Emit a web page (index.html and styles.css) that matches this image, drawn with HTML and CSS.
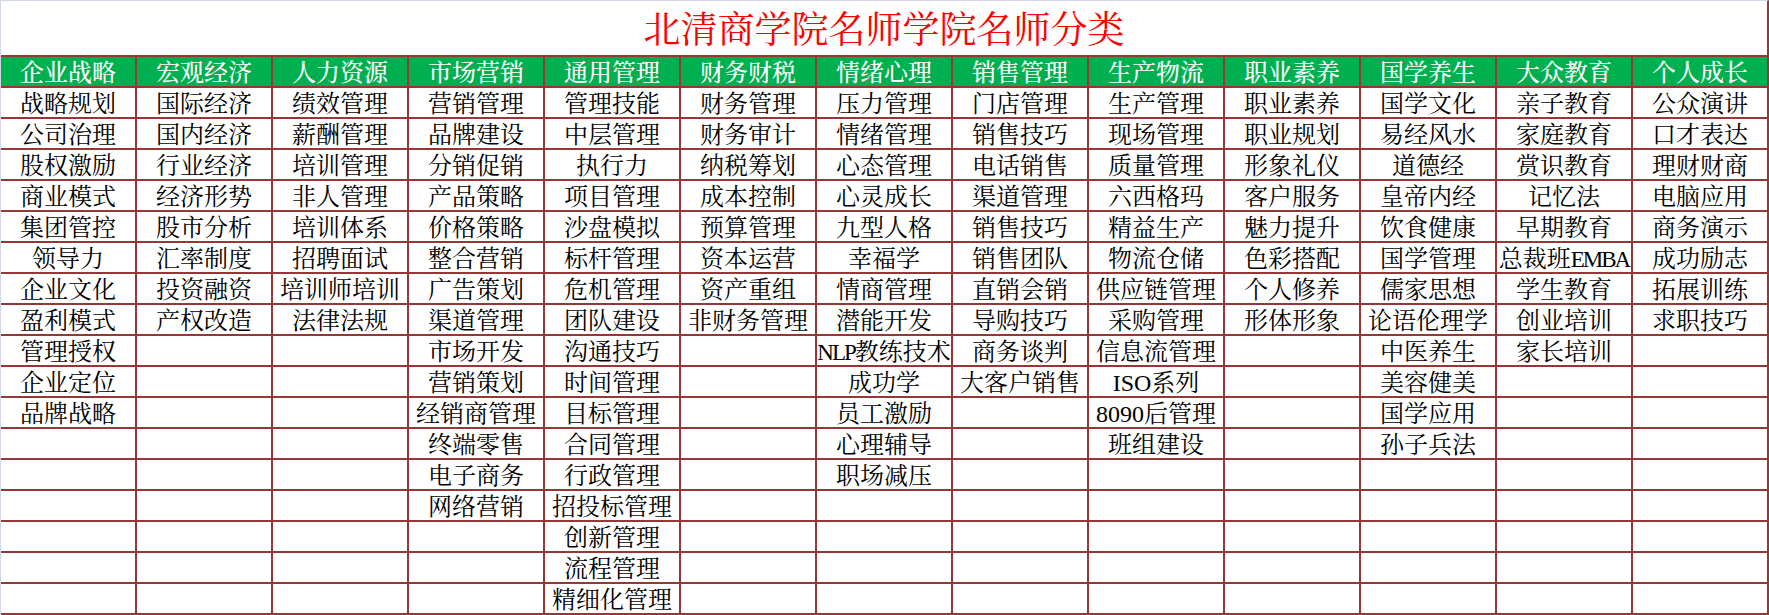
FILE: index.html
```html
<!DOCTYPE html>
<html lang="zh-CN">
<head>
<meta charset="utf-8">
<title>北清商学院名师学院名师分类</title>
<link rel="stylesheet" href="styles.css">
</head>
<body>
<div class="sheet">
  <div class="title">北清商学院名师学院名师分类</div>
  <div class="table">
    <div class="col">
      <div class="cell head">企业战略</div>
      <div class="cell">战略规划</div><div class="cell">公司治理</div><div class="cell">股权激励</div><div class="cell">商业模式</div><div class="cell">集团管控</div><div class="cell">领导力</div><div class="cell">企业文化</div><div class="cell">盈利模式</div><div class="cell">管理授权</div><div class="cell">企业定位</div><div class="cell">品牌战略</div><div class="cell"></div><div class="cell"></div><div class="cell"></div><div class="cell"></div><div class="cell"></div><div class="cell"></div>
    </div>
    <div class="col">
      <div class="cell head">宏观经济</div>
      <div class="cell">国际经济</div><div class="cell">国内经济</div><div class="cell">行业经济</div><div class="cell">经济形势</div><div class="cell">股市分析</div><div class="cell">汇率制度</div><div class="cell">投资融资</div><div class="cell">产权改造</div><div class="cell"></div><div class="cell"></div><div class="cell"></div><div class="cell"></div><div class="cell"></div><div class="cell"></div><div class="cell"></div><div class="cell"></div><div class="cell"></div>
    </div>
    <div class="col">
      <div class="cell head">人力资源</div>
      <div class="cell">绩效管理</div><div class="cell">薪酬管理</div><div class="cell">培训管理</div><div class="cell">非人管理</div><div class="cell">培训体系</div><div class="cell">招聘面试</div><div class="cell">培训师培训</div><div class="cell">法律法规</div><div class="cell"></div><div class="cell"></div><div class="cell"></div><div class="cell"></div><div class="cell"></div><div class="cell"></div><div class="cell"></div><div class="cell"></div><div class="cell"></div>
    </div>
    <div class="col">
      <div class="cell head">市场营销</div>
      <div class="cell">营销管理</div><div class="cell">品牌建设</div><div class="cell">分销促销</div><div class="cell">产品策略</div><div class="cell">价格策略</div><div class="cell">整合营销</div><div class="cell">广告策划</div><div class="cell">渠道管理</div><div class="cell">市场开发</div><div class="cell">营销策划</div><div class="cell">经销商管理</div><div class="cell">终端零售</div><div class="cell">电子商务</div><div class="cell">网络营销</div><div class="cell"></div><div class="cell"></div><div class="cell"></div>
    </div>
    <div class="col">
      <div class="cell head">通用管理</div>
      <div class="cell">管理技能</div><div class="cell">中层管理</div><div class="cell">执行力</div><div class="cell">项目管理</div><div class="cell">沙盘模拟</div><div class="cell">标杆管理</div><div class="cell">危机管理</div><div class="cell">团队建设</div><div class="cell">沟通技巧</div><div class="cell">时间管理</div><div class="cell">目标管理</div><div class="cell">合同管理</div><div class="cell">行政管理</div><div class="cell">招投标管理</div><div class="cell">创新管理</div><div class="cell">流程管理</div><div class="cell">精细化管理</div>
    </div>
    <div class="col">
      <div class="cell head">财务财税</div>
      <div class="cell">财务管理</div><div class="cell">财务审计</div><div class="cell">纳税筹划</div><div class="cell">成本控制</div><div class="cell">预算管理</div><div class="cell">资本运营</div><div class="cell">资产重组</div><div class="cell">非财务管理</div><div class="cell"></div><div class="cell"></div><div class="cell"></div><div class="cell"></div><div class="cell"></div><div class="cell"></div><div class="cell"></div><div class="cell"></div><div class="cell"></div>
    </div>
    <div class="col">
      <div class="cell head">情绪心理</div>
      <div class="cell">压力管理</div><div class="cell">情绪管理</div><div class="cell">心态管理</div><div class="cell">心灵成长</div><div class="cell">九型人格</div><div class="cell">幸福学</div><div class="cell">情商管理</div><div class="cell">潜能开发</div><div class="cell"><span class="lat">NLP</span>教练技术</div><div class="cell">成功学</div><div class="cell">员工激励</div><div class="cell">心理辅导</div><div class="cell">职场减压</div><div class="cell"></div><div class="cell"></div><div class="cell"></div><div class="cell"></div>
    </div>
    <div class="col">
      <div class="cell head">销售管理</div>
      <div class="cell">门店管理</div><div class="cell">销售技巧</div><div class="cell">电话销售</div><div class="cell">渠道管理</div><div class="cell">销售技巧</div><div class="cell">销售团队</div><div class="cell">直销会销</div><div class="cell">导购技巧</div><div class="cell">商务谈判</div><div class="cell">大客户销售</div><div class="cell"></div><div class="cell"></div><div class="cell"></div><div class="cell"></div><div class="cell"></div><div class="cell"></div><div class="cell"></div>
    </div>
    <div class="col">
      <div class="cell head">生产物流</div>
      <div class="cell">生产管理</div><div class="cell">现场管理</div><div class="cell">质量管理</div><div class="cell">六西格玛</div><div class="cell">精益生产</div><div class="cell">物流仓储</div><div class="cell">供应链管理</div><div class="cell">采购管理</div><div class="cell">信息流管理</div><div class="cell">ISO系列</div><div class="cell">8090后管理</div><div class="cell">班组建设</div><div class="cell"></div><div class="cell"></div><div class="cell"></div><div class="cell"></div><div class="cell"></div>
    </div>
    <div class="col">
      <div class="cell head">职业素养</div>
      <div class="cell">职业素养</div><div class="cell">职业规划</div><div class="cell">形象礼仪</div><div class="cell">客户服务</div><div class="cell">魅力提升</div><div class="cell">色彩搭配</div><div class="cell">个人修养</div><div class="cell">形体形象</div><div class="cell"></div><div class="cell"></div><div class="cell"></div><div class="cell"></div><div class="cell"></div><div class="cell"></div><div class="cell"></div><div class="cell"></div><div class="cell"></div>
    </div>
    <div class="col">
      <div class="cell head">国学养生</div>
      <div class="cell">国学文化</div><div class="cell">易经风水</div><div class="cell">道德经</div><div class="cell">皇帝内经</div><div class="cell">饮食健康</div><div class="cell">国学管理</div><div class="cell">儒家思想</div><div class="cell">论语伦理学</div><div class="cell">中医养生</div><div class="cell">美容健美</div><div class="cell">国学应用</div><div class="cell">孙子兵法</div><div class="cell"></div><div class="cell"></div><div class="cell"></div><div class="cell"></div><div class="cell"></div>
    </div>
    <div class="col">
      <div class="cell head">大众教育</div>
      <div class="cell">亲子教育</div><div class="cell">家庭教育</div><div class="cell">赏识教育</div><div class="cell">记忆法</div><div class="cell">早期教育</div><div class="cell">总裁班<span class="lat">EMBA</span></div><div class="cell">学生教育</div><div class="cell">创业培训</div><div class="cell">家长培训</div><div class="cell"></div><div class="cell"></div><div class="cell"></div><div class="cell"></div><div class="cell"></div><div class="cell"></div><div class="cell"></div><div class="cell"></div>
    </div>
    <div class="col">
      <div class="cell head">个人成长</div>
      <div class="cell">公众演讲</div><div class="cell">口才表达</div><div class="cell">理财财商</div><div class="cell">电脑应用</div><div class="cell">商务演示</div><div class="cell">成功励志</div><div class="cell">拓展训练</div><div class="cell">求职技巧</div><div class="cell"></div><div class="cell"></div><div class="cell"></div><div class="cell"></div><div class="cell"></div><div class="cell"></div><div class="cell"></div><div class="cell"></div><div class="cell"></div>
    </div>
  </div>
</div>
</body>
</html>
```

FILE: styles.css
```css
html, body {
  margin: 0;
  padding: 0;
  background: #ffffff;
}

.sheet {
  width: 1769px;
  box-sizing: border-box;
  border-top: 1px solid #d0d7e5;
  border-left: 1px solid #d0d7e5;
  border-right: 2px solid #953735;
  font-family: "Liberation Serif", "Noto Serif CJK SC", "Noto Sans CJK SC", serif;
  color: #000000;
}

.title {
  height: 54px;
  box-sizing: border-box;
  padding-top: 5px;
  display: flex;
  align-items: center;
  justify-content: center;
  color: #ff0000;
  font-size: 37px;
  line-height: 49px;
  white-space: nowrap;
}

.table {
  display: grid;
  grid-template-columns: repeat(12, 136px) 134px;
  border-top: 2px solid #953735;
}

.col {
  display: flex;
  flex-direction: column;
}

.cell {
  height: 31px;
  box-sizing: border-box;
  padding-top: 4px;
  border-right: 2px solid #953735;
  border-bottom: 2px solid #953735;
  display: flex;
  align-items: center;
  justify-content: center;
  font-size: 24px;
  line-height: 25px;
  white-space: nowrap;
}

.col:last-child .cell {
  border-right: 0;
}

.head {
  background: #00b050;
  color: #ffffff;
  font-weight: 500;
}

.lat {
  font-size: 23px;
  letter-spacing: -2px;
}
```
